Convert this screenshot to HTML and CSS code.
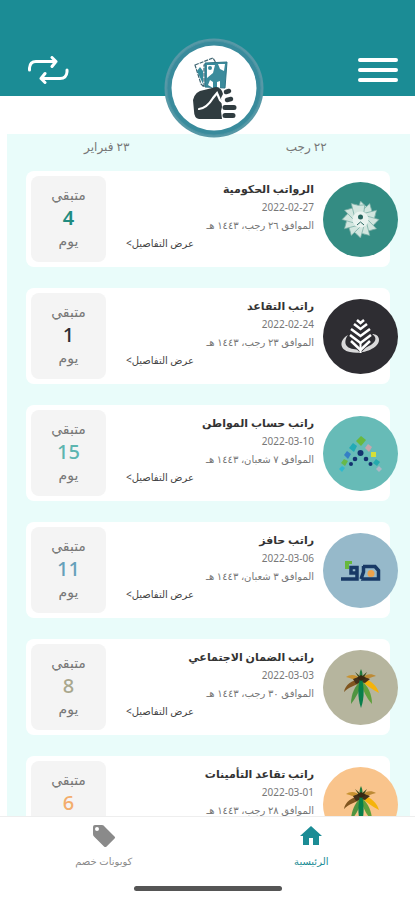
FILE: index.html
```html
<!DOCTYPE html>
<html lang="ar" dir="rtl">
<head>
<meta charset="utf-8">
<meta name="viewport" content="width=device-width, initial-scale=1">
<title>الرواتب</title>
<link rel="stylesheet" href="styles.css">
</head>
<body>
<svg class="defs" aria-hidden="true">
  <defs>
    <g id="palm">
      <path d="M37 29C29 30 22 35 21 42c5-5 11-7 17-9z" fill="#80551f"/>
      <path d="M38 29C33 24 27 24 23 27c5 1 9 3 13 6z" fill="#c99332"/>
      <path d="M38 30C32 36 28 44 28 54c5-7 9-13 11-22z" fill="#4f9440"/>
      <path d="M39 28c9 2 15 8 17 15-7-4-12-7-17-12z" fill="#f5b30a"/>
      <path d="M38 29c4-5 10-6 15-3-5 1-9 3-13 6z" fill="#bd8a35"/>
      <path d="M38 30c7 6 11 14 11 24-6-7-9-13-11-22z" fill="#5fa03c"/>
      <path d="M38 19c2 4 2 8 0 12-2-4-2-8 0-12z" fill="#1f7a3c"/>
      <path d="M38 31l-6-9 6 5 6-5-5 9z" fill="#3f4a1c"/>
      <path d="M30 29l8-3 9 3-5 4-4-1-5 2z" fill="#43301a"/>
      <path d="M38 25c3 10 4 22 0 33-4-11-3-23 0-33z" fill="#087f4b"/>
      <path d="M34 28l4-3 5 3-5 3z" fill="#392812"/>
    </g>
  </defs>
</svg>
<header class="topbar">
  <button class="icon-button" aria-label="القائمة">
    <svg width="42" height="28" viewBox="0 0 42 28" fill="none" stroke="#fff" stroke-width="4" stroke-linecap="round"><path d="M3 4h36M3 14h36M3 24h36"/></svg>
  </button>
  <button class="icon-button" aria-label="تبديل">
    <svg width="42" height="28" viewBox="0 0 42 28" fill="none" stroke="#fff" stroke-width="3" stroke-linecap="round" stroke-linejoin="round"><path d="M2.500 14V12Q3 5.500 9 5.500H29M25 1.500l4 4-4 5M40 14v2q-.500 6.500-7 6.500H14M18 17.500l-4 5 4 4"/></svg>
  </button>
  <div class="brand">
    <svg viewBox="0 0 100 100" width="100" height="100" aria-hidden="true">
      <circle cx="50" cy="50" r="49.500" fill="#5798a6"/>
      <circle cx="50" cy="50" r="47" fill="#398b9c" stroke="#4b94a3" stroke-width="1"/>
      <circle cx="50" cy="50" r="42.500" fill="#fff"/>
      <path d="M31 27l18-7 3 5-12 2v22l-3-3z" fill="#fff" stroke="#3d6370" stroke-width="1.2" stroke-dasharray="4 1"/>
      <path d="M33 33l3-4 3 4v13z" fill="#368c9c"/>
      <path d="M41 25l22-1-2 26-20-1z" fill="#3b8b9c" stroke="#2f7788"/>
      <path d="M43 27h8l-2 8-6 5zM54 26h7l-1 7-4-2zM44 47l2-5 3 2v6zM53 49v-5l3-1v7z" fill="#fff"/>
      <circle cx="46" cy="30" r="2" fill="#3b8b9c"/>
      <path d="M29 62q2-9 11-10l12-3q6 1 7 7l-2 4 1 9-1 4 1 8H35q-5-1-5-8z" fill="#303c40"/>
      <path d="M35 71q8-1 14-11l4-5 3 7 3 3" fill="none" stroke="#fff" stroke-width="2.2" stroke-linecap="round"/>
      <path d="M62 54l3-1M63 62l4-1" fill="none" stroke="#303c40" stroke-width="4.500" stroke-linecap="round"/>
      <path d="M61 69.500h9M61 77.500h8" fill="none" stroke="#303c40" stroke-width="5" stroke-linecap="round"/>
    </svg>
  </div>
</header>
<main class="panel">
  <div class="dates"><span>٢٢ رجب</span><span>٢٣ فبراير</span></div>
  <div class="cards">
    <article class="card">
      <svg class="badge" viewBox="0 0 75 75" aria-hidden="true">
        <circle cx="37.5" cy="37.5" r="37.5" fill="#348c83"/>
        <defs><path id="petal" d="M37.500 19l5 5 6 3-9 12-6-6z" stroke="#75aba2" stroke-width=".7"/></defs>
        <g fill="#d2e6df">
          <use href="#petal"/><use href="#petal" transform="rotate(30 37.500 37.500)"/><use href="#petal" transform="rotate(60 37.500 37.500)"/><use href="#petal" transform="rotate(90 37.500 37.500)"/><use href="#petal" transform="rotate(120 37.500 37.500)"/><use href="#petal" transform="rotate(150 37.500 37.500)"/><use href="#petal" transform="rotate(180 37.500 37.500)"/><use href="#petal" transform="rotate(210 37.500 37.500)"/><use href="#petal" transform="rotate(240 37.500 37.500)"/><use href="#petal" transform="rotate(270 37.500 37.500)"/><use href="#petal" transform="rotate(300 37.500 37.500)"/><use href="#petal" transform="rotate(330 37.500 37.500)"/>
        </g>
        <circle cx="37.500" cy="37.500" r="8" fill="#e9f3ef"/>
        <circle cx="37.500" cy="35" r="2.500" fill="#28665f"/>
        <path d="M34 43l3.500-3 3.500 3" stroke="#28665f" fill="none"/>
      </svg>
      <div class="info"><h2>الرواتب الحكومية</h2><time datetime="2022-02-27">2022-02-27</time><p>الموافق ٢٦ رجب، ١٤٤٣ هـ</p><a href="#">عرض التفاصيل&gt;</a></div>
      <div class="remain"><span>متبقي</span><strong class="green">4</strong><span>يوم</span></div>
    </article>
    <article class="card">
      <svg class="badge" viewBox="0 0 75 75" aria-hidden="true">
        <circle cx="37.5" cy="37.5" r="37.5" fill="#2e2d32"/>
        <path d="M25 36c-9 5-9 15 2 17 13 3 29-4 29-12 0-4-3-6-7-6 8 5 1 12-11 15-12 2-20-4-13-14z" fill="#d9d9da"/>
        <path d="M37.500 20l12 16-2 8-10 10-10-10-2-8z" fill="#2e2d32"/>
        <g fill="none" stroke="#fff" stroke-width="2.500"><path d="M34 21l3.500 3 3.500-3M31 25l6.500 5 6.500-5M28 30l9.500 7 9.500-7M27 36l10.500 8L48 36M28 42l9.500 9L47 42"/><path d="M37.500 44v10" stroke-width="2"/></g>
      </svg>
      <div class="info"><h2>راتب التقاعد</h2><time datetime="2022-02-24">2022-02-24</time><p>الموافق ٢٣ رجب، ١٤٤٣ هـ</p><a href="#">عرض التفاصيل&gt;</a></div>
      <div class="remain"><span>متبقي</span><strong class="dark">1</strong><span>يوم</span></div>
    </article>
    <article class="card">
      <svg class="badge" viewBox="0 0 75 75" aria-hidden="true">
        <circle cx="37.5" cy="37.5" r="37.5" fill="#67bbb7"/>
        <path d="M38 20l5 4-5 6-5-5z" fill="#69b83e"/><path d="M30 27l4 3-3 6-5-4z" fill="#22abb5"/><path d="M24 35l4 3-3 5-4-4z" fill="#347fc6"/><path d="M21 43l4 2-3 5-4-3z" fill="#67b94b"/><path d="M19 50l3 2-3 4-3-3z" fill="#30b9ce"/>
        <path d="M45 28l4 3-3 5-4-4z" fill="#c6a5ad"/><path d="M48 36l5 0v5h-5z" fill="#d5df37"/><path d="M53 43l4 3-3 4-4-3z" fill="#24aaae"/><path d="M56 50l3 3-3 3-3-3z" fill="#adb7c5"/>
        <g fill="#14326f"><circle cx="37.500" cy="37" r="3"/><circle cx="32" cy="43" r="2.300"/><circle cx="43" cy="43" r="2.300"/><circle cx="28" cy="48" r="2"/><circle cx="47.500" cy="48" r="2"/></g>
      </svg>
      <div class="info"><h2>راتب حساب المواطن</h2><time datetime="2022-03-10">2022-03-10</time><p>الموافق ٧ شعبان، ١٤٤٣ هـ</p><a href="#">عرض التفاصيل&gt;</a></div>
      <div class="remain"><span>متبقي</span><strong class="aqua">15</strong><span>يوم</span></div>
    </article>
    <article class="card">
      <svg class="badge" viewBox="0 0 75 75" aria-hidden="true">
        <circle cx="37.5" cy="37.5" r="37.5" fill="#96b9ca"/>
        <g fill="none" stroke="#183966" stroke-width="3.500"><path d="M18 46h16V34.500h-6V40h6M40 33.500h12l3.500 4V46H38M40.500 33v6L38 46"/></g>
        <path d="M22 28h7v3h-3v5h-4z" fill="#67b83d"/><circle cx="48" cy="40.500" r="3.500" fill="#eca14b"/>
      </svg>
      <div class="info"><h2>راتب حافز</h2><time datetime="2022-03-06">2022-03-06</time><p>الموافق ٣ شعبان، ١٤٤٣ هـ</p><a href="#">عرض التفاصيل&gt;</a></div>
      <div class="remain"><span>متبقي</span><strong class="blue">11</strong><span>يوم</span></div>
    </article>
    <article class="card">
      <svg class="badge" viewBox="0 0 75 75" aria-hidden="true"><circle cx="37.5" cy="37.5" r="37.5" fill="#b6b59e"/><use href="#palm"/></svg>
      <div class="info"><h2>راتب الضمان الاجتماعي</h2><time datetime="2022-03-03">2022-03-03</time><p>الموافق ٣٠ رجب، ١٤٤٣ هـ</p><a href="#">عرض التفاصيل&gt;</a></div>
      <div class="remain"><span>متبقي</span><strong class="sand">8</strong><span>يوم</span></div>
    </article>
    <article class="card">
      <svg class="badge" viewBox="0 0 75 75" aria-hidden="true"><circle cx="37.5" cy="37.5" r="37.5" fill="#f9c48c"/><use href="#palm"/></svg>
      <div class="info"><h2>راتب تقاعد التأمينات</h2><time datetime="2022-03-01">2022-03-01</time><p>الموافق ٢٨ رجب، ١٤٤٣ هـ</p></div>
      <div class="remain"><span>متبقي</span><strong class="orange">6</strong></div>
    </article>
  </div>
</main>
<footer class="bottom">
  <nav class="tabs">
    <a class="active" href="#"><svg width="24" height="24" viewBox="0 0 24 24" fill="currentColor" aria-hidden="true"><path d="M10 21v-7h4v7h6v-9h3L12 2 1 12h3v9z"/></svg><span>الرئيسية</span></a>
    <a href="#"><svg width="24" height="24" viewBox="0 0 24 24" fill="currentColor" aria-hidden="true"><path d="M22.500 12.500l-10-10Q12 1 10 1H3Q1 1 1 3v7q0 1.500 1 2.500l10 10q1.300 1.200 2.600 0l8-8q1-1 0-2zM5 7a2 2 0 1 1 0-4 2 2 0 0 1 0 4z"/></svg><span>كوبونات خصم</span></a>
  </nav>
  <div class="home-bar"></div>
</footer>
</body>
</html>
```
FILE: styles.css
```css
* { box-sizing: border-box; }
body {
  margin: 0;
  height: 100vh;
  display: flex;
  flex-direction: column;
  overflow: hidden;
  background: #fff;
  color: #777;
  font-family: "Noto Sans", "DejaVu Sans", sans-serif;
}
.defs { position: absolute; width: 0; height: 0; }
.topbar {
  position: relative;
  flex: none;
  height: 96px;
  padding: 0 16px 12px 27px;
  display: flex;
  justify-content: space-between;
  align-items: flex-end;
  background: #1b8c95;
}
.icon-button { padding: 0; border: 0; background: none; display: flex; }
.brand {
  position: absolute;
  top: 38px;
  left: 0;
  right: 0;
  display: flex;
  justify-content: center;
  padding-left: 12px;
}
.brand svg { display: block; }
.panel {
  flex: 1;
  min-height: 0;
  overflow: hidden;
  margin: 38px 5px 0 7px;
  padding: 0 20px 0 19px;
  background: #e9fcfa;
}
.dates {
  display: grid;
  grid-template-columns: 1fr 1fr;
  height: 37px;
  margin: 0 -16px 0 -19px;
  font-size: 12px;
  line-height: 26px;
  text-align: center;
}
.cards { display: flex; flex-direction: column; gap: 21px; }
.card {
  display: flex;
  align-items: center;
  height: 96px;
  flex: none;
  border-radius: 8px;
  background: #fff;
}
.badge { width: 75px; height: 75px; flex: none; margin-right: -8px; }
.info {
  flex: 1;
  min-width: 0;
  align-self: stretch;
  display: flex;
  flex-direction: column;
  align-items: flex-start;
  padding: 8px 9px 0 20px;
  font-size: 10px;
  line-height: 18px;
  white-space: nowrap;
}
.info h2 { margin: 0; font-size: 11px; line-height: 19px; color: #333; }
.info p { margin: 0; }
.info a { align-self: flex-end; color: #444; text-decoration: none; }
.remain {
  flex: none;
  width: 75px;
  height: 86px;
  margin-left: 5px;
  padding-top: 7px;
  display: flex;
  flex-direction: column;
  align-items: center;
  border-radius: 8px;
  background: #f4f4f4;
  font-size: 14px;
  line-height: 24px;
}
.remain strong { font-size: 20px; font-weight: 500; line-height: 22px; }
.remain .green { color: #208b7f; font-weight: 600; }
.dark { color: #2d2d33; }
.aqua { color: #5db5b0; }
.blue { color: #65a0ba; }
.sand { color: #a9a78d; }
.orange { color: #f3ad6c; }
.bottom {
  flex: none;
  height: 84px;
  border-top: 1px solid #eee;
  background: #fff;
}
.tabs { display: grid; grid-template-columns: 1fr 1fr; height: 69px; }
.tabs a {
  display: flex;
  flex-direction: column;
  align-items: center;
  padding-top: 7px;
  gap: 4px;
  color: #8a8a8a;
  text-decoration: none;
  font-size: 10px;
  line-height: 18px;
}
.tabs .active { color: #1b8c95; }
.home-bar {
  width: 148px;
  height: 5px;
  margin: 0 auto;
  border-radius: 3px;
  background: #555;
}
```
